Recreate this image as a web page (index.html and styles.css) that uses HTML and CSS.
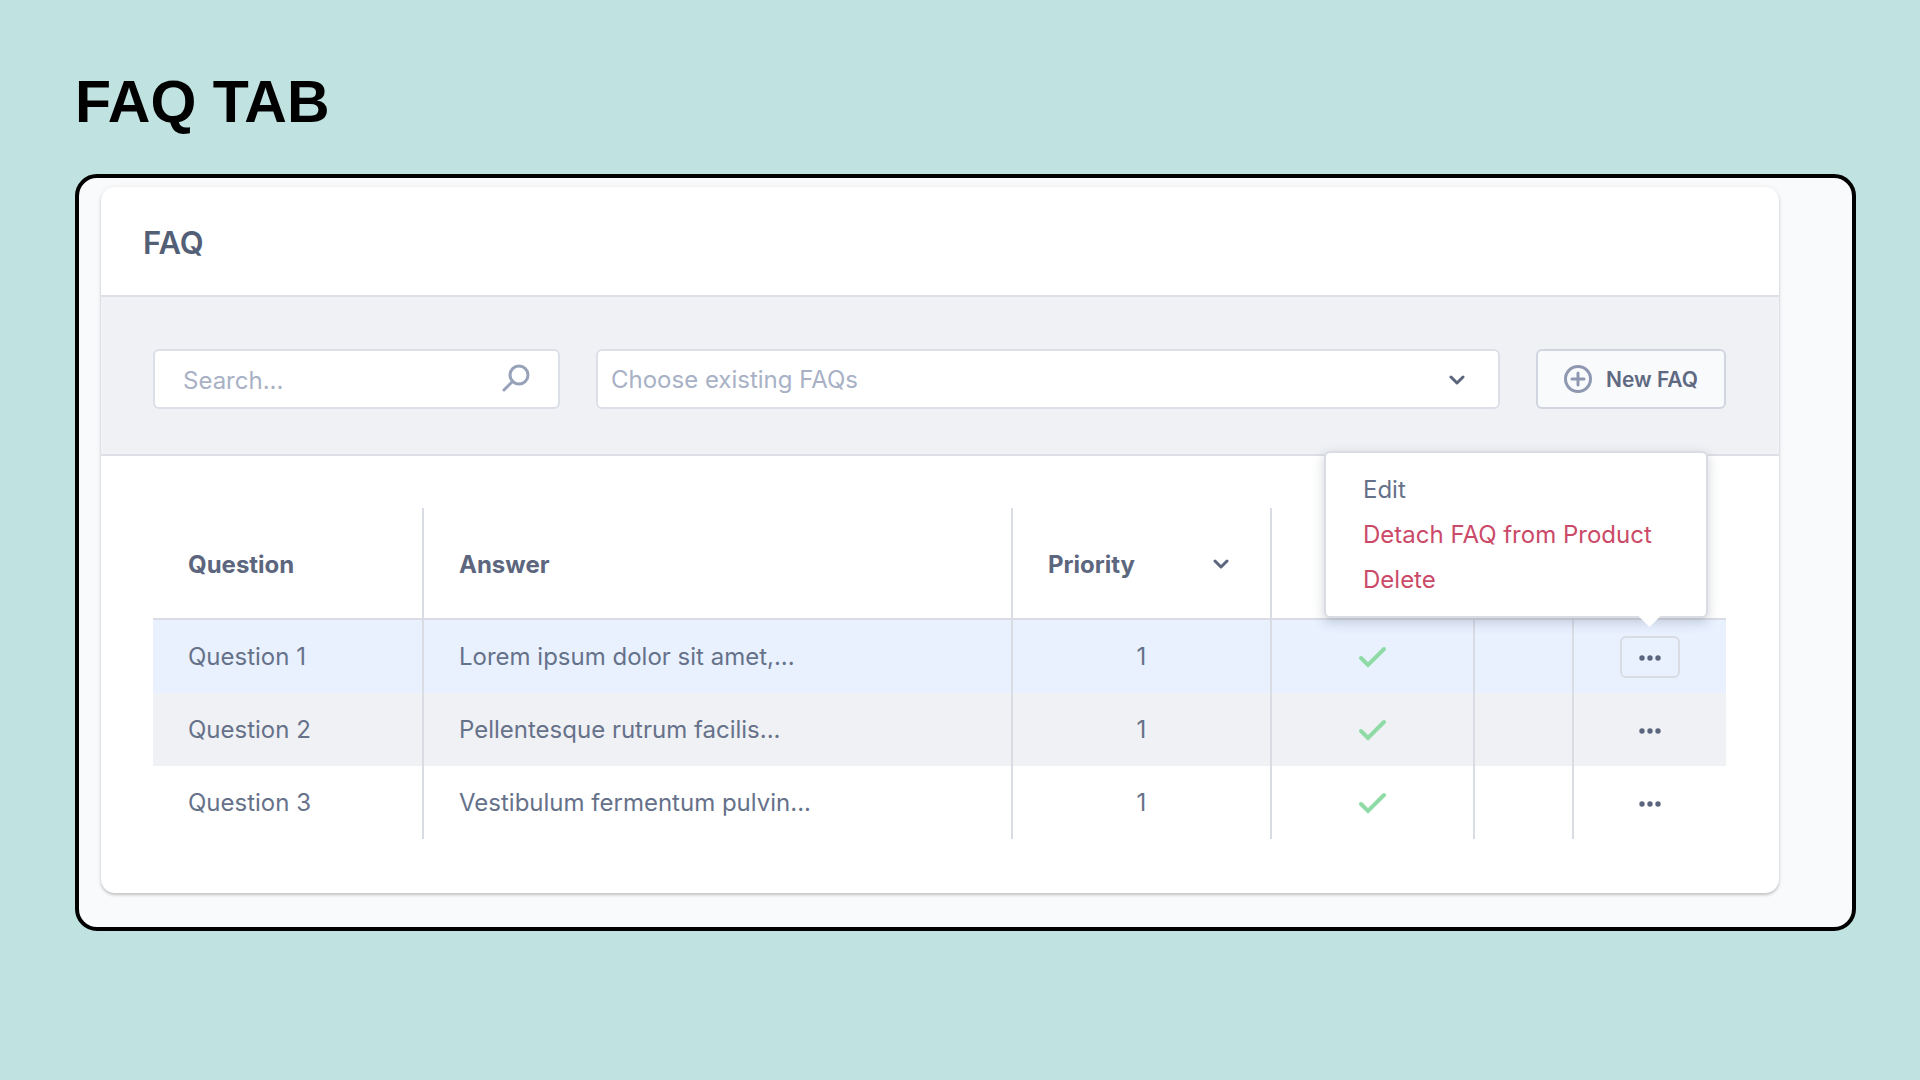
FILE: index.html
```
<!DOCTYPE html>
<html lang="en">
<head>
  <meta charset="utf-8">
  <title>FAQ Tab</title>
  <meta name="viewport" content="width=device-width, initial-scale=1">
  <link rel="stylesheet" href="styles.css">
</head>
<body>
  <main class="page">
    <h1 class="page-title">FAQ TAB</h1>
    <div class="frame">
      <section class="card">
        <h2 class="card-title">FAQ</h2>
        <form class="toolbar">
          <div class="field">
            <input class="control search" type="search" placeholder="Search..." aria-label="Search">
            <svg class="search-icon" viewBox="0 0 30 30" aria-hidden="true"><circle cx="18" cy="12" r="9"/><path d="M11.500 18.500 3 27"/></svg>
          </div>
          <div class="field">
            <select class="control choose" aria-label="Choose existing FAQs">
              <option>Choose existing FAQs</option>
            </select>
            <svg class="chevron choose-icon" viewBox="0 0 16 10" aria-hidden="true"><path d="M2 2 8 8 14 2"/></svg>
          </div>
          <button class="new-button" type="button">
            <svg class="plus-icon" viewBox="0 0 28 28" aria-hidden="true"><circle cx="14" cy="14" r="12.500"/><path d="M14 8v12M8 14h12"/></svg>
            New FAQ
          </button>
        </form>
        <div class="table-area">
          <table class="faq-table">
            <colgroup>
              <col class="col-question"><col class="col-answer"><col class="col-priority"><col class="col-active"><col class="col-blank"><col class="col-actions">
            </colgroup>
            <thead>
              <tr>
                <th scope="col">Question</th>
                <th scope="col">Answer</th>
                <th scope="col">
                  <div class="sortable">Priority
                    <svg class="chevron" viewBox="0 0 16 10" aria-hidden="true"><path d="M2 2 8 8 14 2"/></svg>
                  </div>
                </th>
                <th></th>
                <th></th>
                <th></th>
              </tr>
            </thead>
            <tbody>
              <tr class="selected">
                <td>Question 1</td>
                <td>Lorem ipsum dolor sit amet,...</td>
                <td class="center">1</td>
                <td class="center"><svg class="check" viewBox="0 0 30 24" role="img" aria-label="Active"><path d="M3 13 10 20 26 4"/></svg></td>
                <td></td>
                <td class="center">
                  <div class="actions">
                    <button class="more open" type="button" aria-label="Actions for question 1" aria-expanded="true">
                      <svg class="dots" viewBox="0 0 24 6" aria-hidden="true"><circle cx="4" cy="3" r="2.700"/><circle cx="12" cy="3" r="2.700"/><circle cx="20" cy="3" r="2.700"/></svg>
                    </button>
                    <div class="menu">
                      <button class="menu-item" type="button">Edit</button>
                      <button class="menu-item danger" type="button">Detach FAQ from Product</button>
                      <button class="menu-item danger" type="button">Delete</button>
                    </div>
                  </div>
                </td>
              </tr>
              <tr class="striped">
                <td>Question 2</td>
                <td>Pellentesque rutrum facilis...</td>
                <td class="center">1</td>
                <td class="center"><svg class="check" viewBox="0 0 30 24" role="img" aria-label="Active"><path d="M3 13 10 20 26 4"/></svg></td>
                <td></td>
                <td class="center">
                  <div class="actions">
                    <button class="more" type="button" aria-label="Actions for question 2">
                      <svg class="dots" viewBox="0 0 24 6" aria-hidden="true"><circle cx="4" cy="3" r="2.700"/><circle cx="12" cy="3" r="2.700"/><circle cx="20" cy="3" r="2.700"/></svg>
                    </button>
                  </div>
                </td>
              </tr>
              <tr>
                <td>Question 3</td>
                <td>Vestibulum fermentum pulvin...</td>
                <td class="center">1</td>
                <td class="center"><svg class="check" viewBox="0 0 30 24" role="img" aria-label="Active"><path d="M3 13 10 20 26 4"/></svg></td>
                <td></td>
                <td class="center">
                  <div class="actions">
                    <button class="more" type="button" aria-label="Actions for question 3">
                      <svg class="dots" viewBox="0 0 24 6" aria-hidden="true"><circle cx="4" cy="3" r="2.700"/><circle cx="12" cy="3" r="2.700"/><circle cx="20" cy="3" r="2.700"/></svg>
                    </button>
                  </div>
                </td>
              </tr>
            </tbody>
          </table>
        </div>
      </section>
    </div>
  </main>
</body>
</html>
```
FILE: styles.css
```
* {
  box-sizing: border-box;
}

body {
  margin: 0;
  background: #c0e2e0;
  color: #66718a;
  font-family: Inter, "Liberation Sans", sans-serif;
  font-size: 24px;
}

svg {
  display: block;
  flex: none;
  fill: none;
}

button {
  font: inherit;
  color: inherit;
}

.page {
  padding: 68px 64px 64px 75px;
}

.page-title {
  margin: 0 0 38px;
  color: #000;
  font-family: "Liberation Sans", Arial, sans-serif;
  font-size: 59px;
  font-weight: 700;
  line-height: 68px;
}

.frame {
  padding: 9px 73px 34px 22px;
  border: 4px solid #000;
  border-radius: 22px;
  background: #f9fafc;
}

.card {
  border-radius: 14px;
  background: #fff;
  box-shadow: 0 2px 3px rgba(0, 0, 0, 0.2), 0 0 6px rgba(0, 0, 0, 0.06);
}

.card-title {
  margin: 0;
  padding: 4px 42px 0;
  font-size: 31px;
  font-weight: 600;
  line-height: 104px;
  color: #535f76;
}

.toolbar {
  display: grid;
  grid-template-columns: 407px minmax(0, 1fr) 190px;
  gap: 36px;
  padding: 52px 53px 45px 52px;
  border-top: 2px solid #dcdfe6;
  border-bottom: 2px solid #dcdfe6;
  background: #f0f1f5;
}

.field {
  position: relative;
}

.control {
  display: block;
  width: 100%;
  height: 60px;
  border: 2px solid #dcdfe8;
  border-radius: 6px;
  background: #fff;
  color: #a8b1c5;
  font: inherit;
  appearance: none;
}

.search {
  padding: 2px 60px 0 28px;
}

.search::placeholder {
  color: #a8b1c5;
  opacity: 1;
}

.choose {
  padding: 0 60px 0 13px;
}

.search-icon {
  position: absolute;
  top: 14px;
  right: 29px;
  width: 30px;
  height: 30px;
  stroke: #97a2b8;
  stroke-width: 3;
  stroke-linecap: round;
}

.chevron {
  width: 16px;
  height: 10px;
  stroke: #5b667e;
  stroke-width: 3;
  stroke-linecap: round;
  stroke-linejoin: round;
}

.choose-icon {
  position: absolute;
  top: 26px;
  right: 35px;
}

.new-button {
  display: flex;
  align-items: center;
  justify-content: center;
  gap: 14px;
  height: 60px;
  padding: 0;
  border: 2px solid #d0d5df;
  border-radius: 6px;
  background: #f9fafc;
  color: #5f6a82;
  font-size: 21px;
  font-weight: 600;
  white-space: nowrap;
}

.plus-icon {
  width: 28px;
  height: 28px;
  stroke: #8e98b0;
  stroke-width: 3;
  stroke-linecap: round;
}

.table-area {
  padding: 52px 53px 54px 52px;
}

.faq-table {
  width: 100%;
  border-spacing: 0;
  table-layout: fixed;
}

.col-question {
  width: 271px;
}

.col-priority {
  width: 259px;
}

.col-active {
  width: 203px;
}

.col-blank {
  width: 99px;
}

.col-actions {
  width: 152px;
}

.faq-table th,
.faq-table td {
  padding: 0 35px;
  border-right: 2px solid #d9dce3;
  text-align: left;
  white-space: nowrap;
}

.faq-table th:last-child,
.faq-table td:last-child {
  border-right: 0;
}

.faq-table th {
  height: 112px;
  padding-top: 2px;
  border-bottom: 2px solid #d9dce3;
  color: #5c667e;
  font-weight: 700;
}

.faq-table td {
  height: 73px;
}

.faq-table .center {
  padding: 0;
  text-align: center;
}

.selected {
  background: #e9f1ff;
}

.striped {
  background: #f0f1f5;
}

.sortable {
  display: flex;
  align-items: center;
  justify-content: space-between;
  padding-right: 6px;
}

.check {
  width: 30px;
  height: 24px;
  margin: 0 auto;
  stroke: #8edba6;
  stroke-width: 4;
  stroke-linecap: round;
}

.actions {
  position: relative;
  width: 60px;
  margin: 0 auto;
}

.more {
  display: flex;
  align-items: center;
  justify-content: center;
  width: 60px;
  height: 42px;
  padding: 2px 0 0;
  border: 2px solid transparent;
  border-radius: 6px;
  background: none;
}

.more.open {
  border-color: #d9dce3;
}

.dots {
  width: 24px;
  height: 6px;
  fill: #5b667e;
}

.menu {
  position: absolute;
  right: -28px;
  bottom: calc(100% + 18px);
  width: 384px;
  padding: 14px 0;
  border: 2px solid #d9dce3;
  border-radius: 6px;
  background: #fff;
  box-shadow: 0 4px 12px rgba(60, 75, 105, 0.25);
}

.menu::after {
  content: "";
  position: absolute;
  right: 49px;
  bottom: -8px;
  width: 15px;
  height: 15px;
  background: #fff;
  transform: rotate(45deg);
}

.menu-item {
  display: block;
  width: 100%;
  padding: 0 37px;
  border: 0;
  background: none;
  line-height: 45px;
  text-align: left;
}

.danger {
  color: #cb4a68;
}
```
